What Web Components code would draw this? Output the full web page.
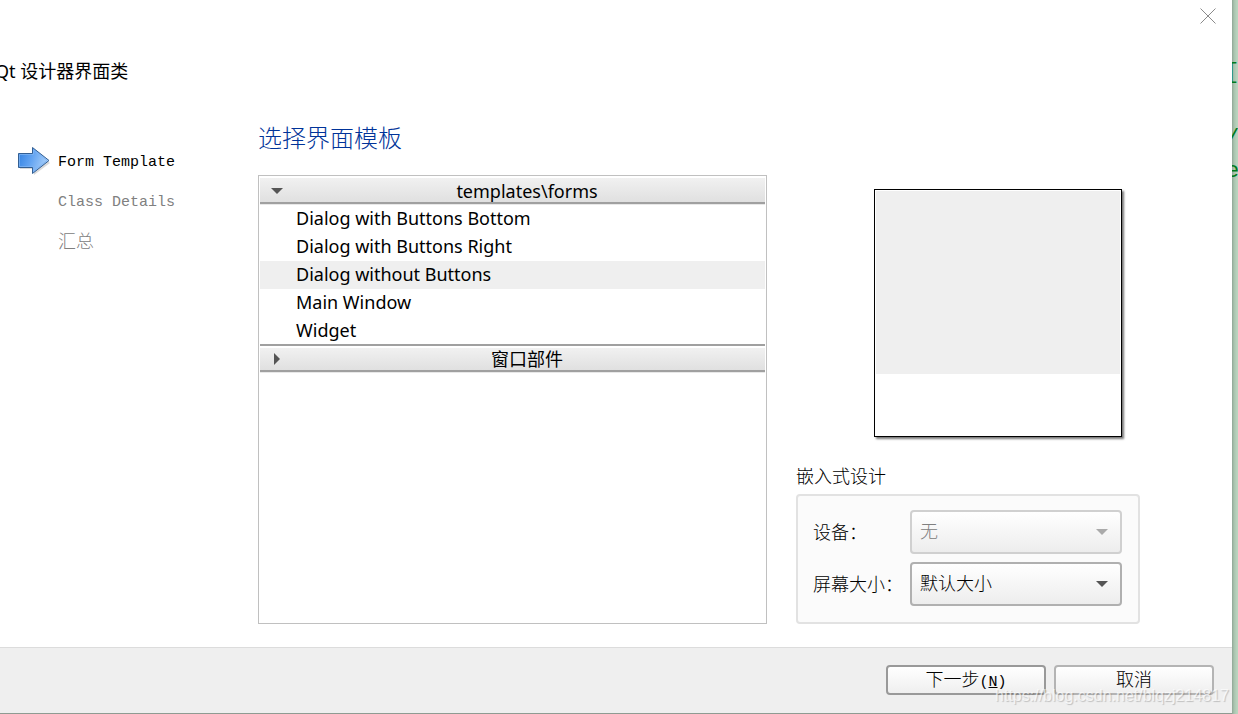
<!DOCTYPE html>
<html lang="zh-CN">
<head>
<meta charset="utf-8">
<title>Qt 设计器界面类</title>
<style>
  body {
    margin: 0;
    font-family: "Liberation Mono", "Noto Sans CJK SC", monospace;
    font-size: 18px;
    font-weight: 300;
    color: #000;
  }
</style>
</head>
<body>
<wizard-app></wizard-app>

<script>
class EditorStrip extends HTMLElement {
  constructor() {
    super();
    this.attachShadow({ mode: 'open' });
    this.shadowRoot.innerHTML = `
      <style>
        :host {
          display: block;
          overflow: hidden;
          padding-top: 56px;
          box-sizing: border-box;
          background: linear-gradient(to right, #8fa695, #a9c2ae 2px, #b9d4be 5px);
          color: #007a1c;
          font: 22px/33px "Liberation Mono", monospace;
        }
        pre {
          margin: 0 0 0 -6px;
          font: inherit;
        }
      </style>
      <pre><slot></slot></pre>
    `;
  }
}

class WizardStep extends HTMLElement {
  constructor() {
    super();
    this.attachShadow({ mode: 'open' });
    this.shadowRoot.innerHTML = `
      <style>
        :host {
          display: grid;
          grid-template-columns: 32px 1fr;
          column-gap: 8px;
          align-items: center;
          height: 40px;
          color: #808080;
        }
        :host([current]) { color: #000; }
        svg { display: none; }
        :host([current]) svg { display: block; }
        span {
          grid-column: 2;
          padding-bottom: 3px;
          white-space: nowrap;
        }
        :host([lang="en"]) span {
          padding: 2px 0 0;
          font-size: 15px;
          font-weight: 400;
        }
      </style>
      <svg width="32" height="30" viewBox="0 0 32 30" aria-hidden="true">
        <defs>
          <linearGradient id="fill" x1="0" y1="0" x2="1" y2="0.3">
            <stop offset="0" stop-color="#2f7fe0"/>
            <stop offset="0.5" stop-color="#62a3f1"/>
            <stop offset="1" stop-color="#a6cdf8"/>
          </linearGradient>
        </defs>
        <path d="M2 9H16V4L32 17L16 29V23H2Z" fill="#000" opacity="0.15"/>
        <path d="M0.500 7.500H14.500V1.500L31 14.500L14.500 27.500V21.500H0.500Z" fill="url(#fill)" stroke="#335f93"/>
        <path d="M1.500 8.500H15.500V4L29 14.500L15.500 25V20.500H1.500Z" fill="none" stroke="#7db3f2" opacity="0.8"/>
      </svg>
      <span><slot></slot></span>
    `;
  }

  connectedCallback() {
    this.setAttribute('role', 'listitem');
  }
}

class TemplateCategory extends HTMLElement {
  constructor() {
    super();
    this.attachShadow({ mode: 'open' });
    this.shadowRoot.innerHTML = `
      <style>
        :host {
          display: block;
          font-family: "Noto Sans", "Noto Sans CJK SC", sans-serif;
          font-weight: 400;
        }
        button {
          display: grid;
          grid-template-columns: 18px 1fr;
          align-items: center;
          box-sizing: border-box;
          width: 100%;
          height: 28px;
          padding: 0 0 0 11px;
          border: 0;
          border-bottom: 1px solid #e8e8e8;
          background: linear-gradient(#fff 1px, #f1f1f1 1px, #e0e0e0 25px, #a0a0a0 25px);
          color: inherit;
          font: inherit;
          line-height: 24px;
        }
        :host(:not(:first-of-type)) button {
          border-top: 1px solid #a0a0a0;
          box-shadow: 0 -1px #a0a0a0;
          background: linear-gradient(#fff 2px, #f1f1f1 2px, #e0e0e0 24px, #a0a0a0 24px);
        }
        svg { fill: #555; }
        .closed { display: none; }
        :host(:not([open])) .closed { display: block; }
        :host(:not([open])) .opened, :host(:not([open])) div { display: none; }
      </style>
      <button type="button">
        <svg class="opened" width="12" height="12" viewBox="0 0 12 12" aria-hidden="true"><path d="M0 3H12L6 9Z"/></svg>
        <svg class="closed" width="12" height="12" viewBox="0 0 12 12" aria-hidden="true"><path d="M3 0V12L9 6Z"/></svg>
        <span></span>
      </button>
      <div role="listbox"><slot></slot></div>
    `;
  }

  connectedCallback() {
    const button = this.shadowRoot.querySelector('button');
    this.shadowRoot.querySelector('span').textContent = this.getAttribute('label');
    button.setAttribute('aria-expanded', this.hasAttribute('open'));
    button.addEventListener('click', () => {
      this.toggleAttribute('open');
      button.setAttribute('aria-expanded', this.hasAttribute('open'));
    });
  }
}

class TemplateItem extends HTMLElement {
  constructor() {
    super();
    this.attachShadow({ mode: 'open' });
    this.shadowRoot.innerHTML = `
      <style>
        :host {
          display: block;
          padding: 0 0 2px 36px;
          line-height: 26px;
          white-space: nowrap;
        }
        :host([selected]) { background: #efefef; }
      </style>
      <slot></slot>
    `;
  }

  connectedCallback() {
    this.setAttribute('role', 'option');
    this.setAttribute('aria-selected', this.hasAttribute('selected'));
  }
}

class FormPreview extends HTMLElement {
  constructor() {
    super();
    this.attachShadow({ mode: 'open' });
    this.shadowRoot.innerHTML = `
      <style>
        :host {
          display: block;
          box-sizing: border-box;
          width: 248px;
          height: 248px;
          padding: 1px;
          border: 1px solid #000;
          background: #fff;
          box-shadow: 2px 2px 2px #777;
        }
        div { height: 75%; background: #efefef; }
      </style>
      <div></div>
    `;
  }
}

class ComboField extends HTMLElement {
  constructor() {
    super();
    this.attachShadow({ mode: 'open' });
    this.shadowRoot.innerHTML = `
      <style>
        :host {
          display: grid;
          grid-template-columns: 97px 1fr;
          align-items: center;
        }
        label { padding-bottom: 2px; white-space: nowrap; }
        .box { display: grid; align-items: center; }
        select, svg { grid-area: 1 / 1; }
        select {
          appearance: none;
          box-sizing: border-box;
          width: 100%;
          height: 44px;
          margin: 0;
          padding: 2px 32px 0 8px;
          border: 2px solid #b0b0b0;
          border-radius: 4px;
          background: linear-gradient(#fff, #ededed);
          color: #000;
          font: inherit;
        }
        svg {
          justify-self: end;
          margin-right: 14px;
          fill: #555;
          pointer-events: none;
        }
        select:disabled { border-color: #d0d0d0; color: #808080; opacity: 1; }
        select:disabled + svg { fill: #aaa; }
      </style>
      <label for="combo"></label>
      <div class="box">
        <select id="combo"><option></option></select>
        <svg width="12" height="6" viewBox="0 0 12 6" aria-hidden="true"><path d="M0 0H12L6 6Z"/></svg>
      </div>
    `;
  }

  connectedCallback() {
    this.shadowRoot.querySelector('label').textContent = this.getAttribute('label');
    this.shadowRoot.querySelector('option').textContent = this.getAttribute('value');
    this.shadowRoot.querySelector('select').disabled = this.hasAttribute('disabled');
  }
}

class SettingsGroup extends HTMLElement {
  constructor() {
    super();
    this.attachShadow({ mode: 'open' });
    this.shadowRoot.innerHTML = `
      <style>
        :host { display: block; }
        h3 {
          margin: 0 0 4px;
          font: inherit;
          line-height: 24px;
        }
        div {
          display: grid;
          row-gap: 8px;
          padding: 14px 16px 16px 15px;
          border: 2px solid #e2e2e2;
          border-radius: 4px;
          background: #fbfbfb;
        }
      </style>
      <h3 id="title"></h3>
      <div role="group" aria-labelledby="title"><slot></slot></div>
    `;
  }

  connectedCallback() {
    this.shadowRoot.querySelector('h3').textContent = this.getAttribute('label');
  }
}

class WizardButton extends HTMLElement {
  constructor() {
    super();
    this.attachShadow({ mode: 'open' });
    this.shadowRoot.innerHTML = `
      <style>
        :host { display: block; width: 160px; }
        button {
          width: 100%;
          height: 30px;
          padding: 2px 0 0;
          border: 2px solid #b4b4b4;
          border-radius: 4px;
          background: linear-gradient(#fff, #efefef);
          color: #000;
          font: inherit;
          line-height: 24px;
        }
        :host([default]) button { border-color: #999; }
        ::slotted(span) { font-size: 15px; }
      </style>
      <button type="button"><slot></slot></button>
    `;
  }
}

class WizardDialog extends HTMLElement {
  constructor() {
    super();
    this.attachShadow({ mode: 'open' });
    this.shadowRoot.innerHTML = `
      <style>
        :host {
          display: flex;
          flex-direction: column;
          min-width: 0;
          background: #fff;
        }
        header {
          display: flex;
          justify-content: flex-end;
          padding: 8px 16px 0 0;
        }
        .close {
          width: 16px;
          height: 16px;
          padding: 0;
          border: 0;
          background: none;
        }
        .close svg { display: block; stroke: #8a8a8a; }
        h1 {
          margin: 34px 0 36px -5px;
          font: 400 18px/26px "Noto Sans", "Noto Sans CJK SC", sans-serif;
        }
        main {
          flex: 1;
          display: grid;
          grid-template-columns: 240px 1fr;
          padding: 0 92px 23px 18px;
        }
        nav { padding-top: 21px; }
        .page { display: flex; flex-direction: column; }
        h2 {
          margin: 0 0 13px;
          font-size: 24px;
          font-weight: 300;
          line-height: 42px;
          color: #003399;
        }
        .columns {
          flex: 1;
          display: grid;
          grid-template-columns: 1fr 344px;
          column-gap: 29px;
        }
        .tree {
          padding: 1px;
          border: 1px solid #c0c0c0;
        }
        aside {
          display: flex;
          flex-direction: column;
          justify-content: space-between;
        }
        form-preview { align-self: flex-end; margin: 14px 18px 20px 0; }
        footer {
          display: flex;
          justify-content: flex-end;
          gap: 8px;
          padding: 17px 18px 18px;
          border-top: 1px solid #dcdcdc;
          border-bottom: 1px solid #8f9b92;
          background: #efefef;
        }
      </style>
      <header>
        <button class="close" type="button" aria-label="Close">
          <svg width="16" height="16" viewBox="0 0 16 16"><path d="M0.500 0.500L15.500 15.500M15.500 0.500L0.500 15.500"/></svg>
        </button>
      </header>
      <h1>Qt 设计器界面类</h1>
      <main>
        <nav><slot name="steps"></slot></nav>
        <div class="page">
          <h2>选择界面模板</h2>
          <div class="columns">
            <div class="tree"><slot name="tree"></slot></div>
            <aside>
              <form-preview></form-preview>
              <slot name="settings"></slot>
            </aside>
          </div>
        </div>
      </main>
      <footer><slot name="buttons"></slot></footer>
    `;
  }
}

class WizardApp extends HTMLElement {
  constructor() {
    super();
    this.attachShadow({ mode: 'open' });
    this.shadowRoot.innerHTML = `
      <style>
        :host {
          position: relative;
          display: grid;
          grid-template-columns: minmax(0, 1fr) 6px;
          min-height: 100vh;
          overflow: hidden;
        }
        .watermark {
          position: absolute;
          right: 9px;
          bottom: 6px;
          color: rgba(255, 255, 255, 0.7);
          font: 16px/24px "Liberation Sans", sans-serif;
          text-shadow: 1px 1px 1px rgba(0, 0, 0, 0.2);
          pointer-events: none;
        }
      </style>
      <wizard-dialog>
        <div slot="steps" role="list">
          <wizard-step lang="en" current>Form Template</wizard-step>
          <wizard-step lang="en">Class Details</wizard-step>
          <wizard-step>汇总</wizard-step>
        </div>
        <div slot="tree">
          <template-category label="templates\\forms" open>
            <template-item>Dialog with Buttons Bottom</template-item>
            <template-item>Dialog with Buttons Right</template-item>
            <template-item selected>Dialog without Buttons</template-item>
            <template-item>Main Window</template-item>
            <template-item>Widget</template-item>
          </template-category>
          <template-category label="窗口部件"></template-category>
        </div>
        <settings-group slot="settings" label="嵌入式设计">
          <combo-field label="设备：" value="无" disabled></combo-field>
          <combo-field label="屏幕大小：" value="默认大小"></combo-field>
        </settings-group>
        <wizard-button slot="buttons" default>下一步<span>(<u>N</u>)</span></wizard-button>
        <wizard-button slot="buttons">取消</wizard-button>
      </wizard-dialog>
      <editor-strip>[

/
e</editor-strip>
      <div class="watermark">https://blog.csdn.net/blqzj214817</div>
    `;
  }
}

customElements.define('editor-strip', EditorStrip);
customElements.define('wizard-step', WizardStep);
customElements.define('template-category', TemplateCategory);
customElements.define('template-item', TemplateItem);
customElements.define('form-preview', FormPreview);
customElements.define('combo-field', ComboField);
customElements.define('settings-group', SettingsGroup);
customElements.define('wizard-button', WizardButton);
customElements.define('wizard-dialog', WizardDialog);
customElements.define('wizard-app', WizardApp);
</script>
</body>
</html>
